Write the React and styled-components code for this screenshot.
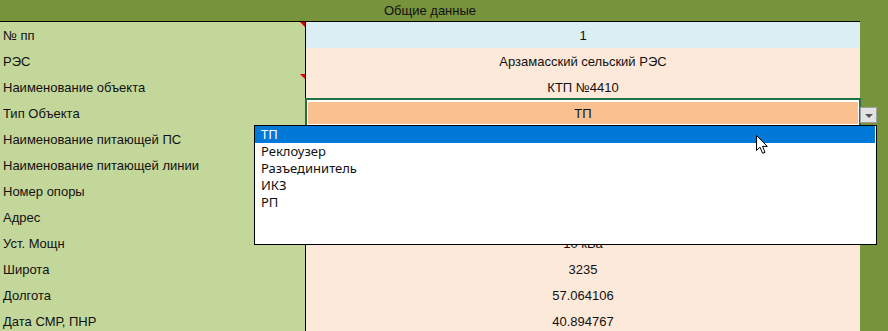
import React from 'react'
import styled, { createGlobalStyle } from 'styled-components'

const GlobalStyle = createGlobalStyle`
  html, body {
    margin: 0;
    padding: 0;
    background: #77933c;
    overflow: hidden;
  }
`

const Sheet = styled.div`
  position: relative;
  width: 888px;
  height: 331px;
  overflow: hidden;
  font-family: "Liberation Sans", Arial, sans-serif;
  font-size: 13px;
  color: #111;
`

const Table = styled.div`
  width: 860px;
  display: flex;
  flex-direction: column;
`

const Header = styled.div`
  height: 21px;
  line-height: 21px;
  text-align: center;
  background: #77933c;
`

const Row = styled.div`
  display: grid;
  grid-template-columns: 306px 554px;
  height: 25px;
  border-top: 1px solid #000;
`

const Label = styled.div`
  position: relative;
  background: #c4d79b;
  border-right: 1px solid #000;
  padding: 1px 0 0 3px;
  line-height: 25px;
  white-space: nowrap;
  overflow: hidden;

  ${p => p.$note && `
    &::after {
      content: '';
      position: absolute;
      top: 0;
      right: 0;
      border-top: 5px solid #e00000;
      border-left: 5px solid transparent;
    }
  `}
`

const Value = styled.div`
  position: relative;
  background: ${p => p.$bg || '#fde9d9'};
  text-align: center;
  padding-top: 1px;
  line-height: 25px;
  white-space: nowrap;

  ${p => p.$selected && `
    box-shadow: inset 0 0 0 2px #fff;
    &::after {
      content: '';
      position: absolute;
      top: -2px;
      left: -1px;
      right: -1px;
      bottom: -1px;
      border: 2px solid #217346;
      pointer-events: none;
    }
  `}
`

const DropButton = styled.div`
  position: absolute;
  left: 860px;
  top: 107px;
  width: 17px;
  height: 16px;
  box-sizing: border-box;
  background: #e3e3e3;
  border: 1px solid #a0a0a0;
  display: flex;
  align-items: center;
  justify-content: center;

  &::before {
    content: '';
    border-top: 4px solid #555;
    border-left: 4px solid transparent;
    border-right: 4px solid transparent;
    margin-top: 1px;
  }
`

const List = styled.div`
  position: absolute;
  left: 254px;
  top: 125px;
  width: 623px;
  height: 120px;
  box-sizing: border-box;
  background: #fff;
  border: 1px solid #000;
  padding-right: 1px;
  font-family: "Noto Sans", "Open Sans", sans-serif;
  font-size: 13px;
`

const Item = styled.div`
  height: 17px;
  line-height: 17px;
  padding-left: 6px;
  color: ${p => (p.$active ? '#fff' : '#111')};
  background: ${p => (p.$active ? '#0078d7' : 'transparent')};
`

const Cursor = styled.svg`
  position: absolute;
  left: 756px;
  top: 135px;
`

const rows = [
  { label: '№ пп', value: '1', bg: '#daeef3', note: true },
  { label: 'РЭС', value: 'Арзамасский сельский РЭС' },
  { label: 'Наименование объекта', value: 'КТП №4410', note: true },
  { label: 'Тип Объекта', value: 'ТП', bg: '#fac090', selected: true },
  { label: 'Наименование питающей ПС', value: 'ПС Слизнево' },
  { label: 'Наименование питающей линии', value: 'ВЛ-10 кВ №1' },
  { label: 'Номер опоры', value: '12' },
  { label: 'Адрес', value: 'с. Слизнево' },
  { label: 'Уст. Мощн', value: '10 кВа' },
  { label: 'Широта', value: '3235' },
  { label: 'Долгота', value: '57.064106' },
  { label: 'Дата СМР, ПНР', value: '40.894767' },
]

const options = ['ТП', 'Реклоузер', 'Разъединитель', 'ИКЗ', 'РП']

const App = () => {
  return (
    <>
      <GlobalStyle />
      <Sheet>
        <Table>
          <Header>Общие данные</Header>
          {rows.map((r) => (
            <Row key={r.label}>
              <Label $note={r.note}>{r.label}</Label>
              <Value $bg={r.bg} $selected={r.selected}>{r.value}</Value>
            </Row>
          ))}
        </Table>

        <DropButton />

        <List>
          {options.map((o, i) => (
            <Item key={o} $active={i === 0}>{o}</Item>
          ))}
        </List>

        {/* mouse pointer */}
        <Cursor width="14" height="21" viewBox="0 0 14 21">
          <path
            d="M0.5 0.5 L0.5 15.5 L4 12.2 L6.6 18.3 L9 17.3 L6.5 11.4 L11.3 11.4 Z"
            fill="#fff"
            stroke="#000"
            strokeWidth="1"
            strokeLinejoin="round"
          />
        </Cursor>
      </Sheet>
    </>
  )
}

export default App
